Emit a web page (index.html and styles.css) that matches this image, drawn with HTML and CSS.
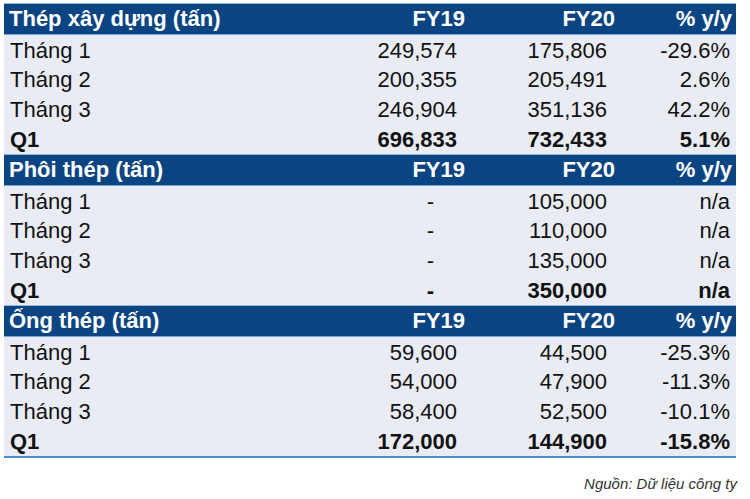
FILE: index.html
```html
<!DOCTYPE html>
<html lang="vi">
<head>
<meta charset="utf-8">
<link rel="stylesheet" href="styles.css">
</head>
<body>
<div class="page">
  <div class="table">
    <div class="section">
      <div class="row head"><span class="lbl">Thép xây dựng (tấn)</span><span class="c2">FY19</span><span class="c3">FY20</span><span class="c4">% y/y</span></div>
      <div class="row"><span class="lbl">Tháng 1</span><span class="c2">249,574</span><span class="c3">175,806</span><span class="c4">-29.6%</span></div>
      <div class="row"><span class="lbl">Tháng 2</span><span class="c2">200,355</span><span class="c3">205,491</span><span class="c4">2.6%</span></div>
      <div class="row"><span class="lbl">Tháng 3</span><span class="c2">246,904</span><span class="c3">351,136</span><span class="c4">42.2%</span></div>
      <div class="row total"><span class="lbl">Q1</span><span class="c2">696,833</span><span class="c3">732,433</span><span class="c4">5.1%</span></div>
    </div>
    <div class="section">
      <div class="row head"><span class="lbl">Phôi thép (tấn)</span><span class="c2">FY19</span><span class="c3">FY20</span><span class="c4">% y/y</span></div>
      <div class="row"><span class="lbl">Tháng 1</span><span class="c2 dash">-</span><span class="c3">105,000</span><span class="c4">n/a</span></div>
      <div class="row"><span class="lbl">Tháng 2</span><span class="c2 dash">-</span><span class="c3">110,000</span><span class="c4">n/a</span></div>
      <div class="row"><span class="lbl">Tháng 3</span><span class="c2 dash">-</span><span class="c3">135,000</span><span class="c4">n/a</span></div>
      <div class="row total"><span class="lbl">Q1</span><span class="c2 dash">-</span><span class="c3">350,000</span><span class="c4">n/a</span></div>
    </div>
    <div class="section last">
      <div class="row head"><span class="lbl">Ống thép (tấn)</span><span class="c2">FY19</span><span class="c3">FY20</span><span class="c4">% y/y</span></div>
      <div class="row"><span class="lbl">Tháng 1</span><span class="c2">59,600</span><span class="c3">44,500</span><span class="c4">-25.3%</span></div>
      <div class="row"><span class="lbl">Tháng 2</span><span class="c2">54,000</span><span class="c3">47,900</span><span class="c4">-11.3%</span></div>
      <div class="row"><span class="lbl">Tháng 3</span><span class="c2">58,400</span><span class="c3">52,500</span><span class="c4">-10.1%</span></div>
      <div class="row total"><span class="lbl">Q1</span><span class="c2">172,000</span><span class="c3">144,900</span><span class="c4">-15.8%</span></div>
    </div>
  </div>
  <div class="source">Nguồn: Dữ liệu công ty</div>
</div>
</body>
</html>
```

FILE: styles.css
```css
html, body {
  margin: 0;
  padding: 0;
  background: #ffffff;
}
.page {
  padding: 3px 14px 0 4px;
  font-family: "Liberation Sans", Arial, sans-serif;
  color: #111111;
}
.table {
  display: flex;
  flex-direction: column;
}
.section {
  display: flex;
  flex-direction: column;
  border-top: 1px solid #9ab6dc;
  background: #e9ecf5;
}
.section.last {
  border-bottom: 2px solid #4b8ed4;
}
.row {
  display: grid;
  grid-template-columns: 1fr 161px 150px 121px;
  height: 30px;
  font-size: 22px;
  line-height: 28px;
  padding-top: 2px;
  box-sizing: border-box;
}
.row span {
  white-space: nowrap;
}
.lbl {
  padding-left: 6px;
}
.c2, .c3, .c4 {
  text-align: right;
}
.row .c2, .row .c3 {
  padding-right: 8px;
}
.row .c2.dash {
  padding-right: 31px;
}
.row .c4 {
  padding-right: 6px;
}
.row.head {
  background: #0b4482;
  color: #ffffff;
  font-weight: bold;
  padding-top: 0;
  line-height: 30px;
  border-bottom: 1px solid #7fa4d6;
  height: 31px;
}
.row.head + .row {
  height: 29px;
}
.row.head .lbl {
  padding-left: 5px;
}
.row.head .c2, .row.head .c3 {
  padding-right: 0;
}
.row.head .c4 {
  padding-right: 4px;
}
.row.total {
  font-weight: bold;
}
.source {
  margin-top: 17px;
  text-align: right;
  font-size: 15px;
  line-height: 17px;
  font-style: italic;
  color: #333333;
  margin-right: -1px;
}
```
